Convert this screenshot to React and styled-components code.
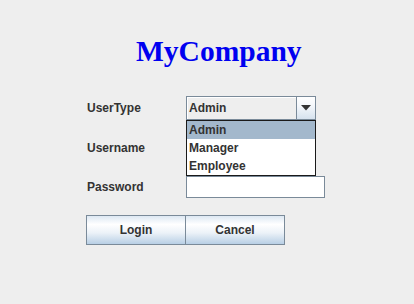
import React, { useState } from 'react';
import styled, { createGlobalStyle } from 'styled-components';

const GlobalStyle = createGlobalStyle`
  html, body {
    margin: 0;
    padding: 0;
    background: #eeeeee;
  }
  body {
    width: 414px;
    height: 304px;
    overflow: hidden;
    font-family: "Liberation Sans", Arial, sans-serif;
  }
`;

const Frame = styled.div`
  width: 414px;
  height: 304px;
  background: #eeeeee;
  display: flex;
  flex-direction: column;
`;

const Title = styled.h1`
  margin: 0;
  padding: 36px 0 0 136px;
  height: 96px;
  box-sizing: border-box;
  font-family: "Liberation Serif", "Times New Roman", serif;
  font-weight: bold;
  font-size: 29.5px;
  line-height: 30px;
  color: #0000f0;
`;

const Form = styled.div`
  display: grid;
  grid-template-columns: 99px 139px;
  grid-template-rows: 24px 22px 22px;
  row-gap: 17px;
  padding-left: 87px;
  align-items: center;
`;

const Label = styled.span`
  font-size: 12px;
  font-weight: bold;
  color: #333333;
`;

const ComboWrap = styled.div`
  position: relative;
  width: 130px;
  height: 24px;
`;

const ComboBox = styled.div`
  display: flex;
  height: 24px;
  box-sizing: border-box;
  border: 1px solid #7a8a99;
  background: #eeeeee;
`;

const ComboValue = styled.div`
  flex: 1;
  display: flex;
  align-items: center;
  padding-left: 2px;
  font-size: 12px;
  font-weight: bold;
  color: #333333;
  box-shadow: inset 1px 1px 0 #ffffff;
`;

const ArrowButton = styled.div`
  width: 18px;
  border-left: 1px solid #7a8a99;
  display: flex;
  align-items: center;
  justify-content: center;
  background: linear-gradient(#ffffff 0%, #f4f7fb 40%, #d6e2ee 100%);
`;

const Popup = styled.ul`
  position: absolute;
  left: 0;
  top: 24px;
  width: 130px;
  margin: 0;
  padding: 0;
  list-style: none;
  box-sizing: border-box;
  border: 1px solid #1a1a1a;
  background: #ffffff;
  z-index: 2;
`;

const PopupItem = styled.li`
  height: 18px;
  line-height: 18px;
  padding-left: 2px;
  font-size: 12px;
  font-weight: bold;
  color: #333333;
  background: ${p => (p.$selected ? '#a3b8cc' : '#ffffff')};
`;

const TextField = styled.input`
  width: ${p => p.$width || 139}px;
  height: 22px;
  box-sizing: border-box;
  border: 1px solid #7a8a99;
  background: #ffffff;
  padding: 0 2px;
  font-size: 12px;
  outline: none;
`;

const Buttons = styled.div`
  display: flex;
  padding: 17px 0 0 86px;
`;

const Button = styled.button`
  width: 100px;
  height: 30px;
  box-sizing: border-box;
  border: 1px solid #7a8a99;
  margin-left: ${p => (p.$joined ? '-1px' : '0')};
  background: linear-gradient(#dde8f3 0%, #ffffff 30%, #ecf2f8 60%, #b8cfe5 100%);
  font-family: "Liberation Sans", Arial, sans-serif;
  font-size: 12px;
  font-weight: bold;
  color: #333333;
  padding: 0;
`;

const users = ['Admin', 'Manager', 'Employee'];

export default function App() {
  const [userType] = useState('Admin');

  return (
    <Frame>
      <GlobalStyle />
      <Title>MyCompany</Title>
      <Form>
        <Label>UserType</Label>
        <ComboWrap>
          <ComboBox>
            <ComboValue>{userType}</ComboValue>
            <ArrowButton>
              <svg width="10" height="6" viewBox="0 0 10 6">
                <path d="M0 0 H10 L5 5.5 Z" fill="#333333" />
              </svg>
            </ArrowButton>
          </ComboBox>
          <Popup>
            {users.map(u => (
              <PopupItem key={u} $selected={u === userType}>{u}</PopupItem>
            ))}
          </Popup>
        </ComboWrap>

        <Label>Username</Label>
        <TextField type="text" $width={130} />

        <Label>Password</Label>
        <TextField type="password" />
      </Form>
      <Buttons>
        <Button>Login</Button>
        <Button $joined>Cancel</Button>
      </Buttons>
    </Frame>
  );
}
